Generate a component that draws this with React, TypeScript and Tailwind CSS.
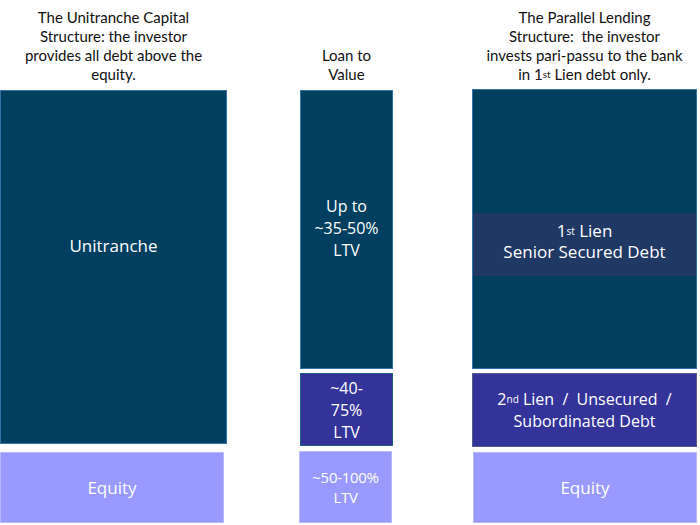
import React from 'react';

const headFont = { fontFamily: 'Lato, "Liberation Sans", sans-serif' };

const Sup: React.FC<{ children: React.ReactNode }> = ({ children }) => (
  <sup className="text-[10px] relative -top-[2px]">{children}</sup>
);

export default function App() {
  return (
    <div
      className="w-[700px] h-[525px] bg-white flex text-white text-[16px]"
      style={{ fontFamily: '"Open Sans", "Noto Sans", sans-serif' }}
    >
      {/* Unitranche column */}
      <div className="w-[227px] flex flex-col">
        <div
          className="h-[89px] flex items-end justify-center pb-[5px] text-center text-[15px] leading-[19px] text-[#111]"
          style={headFont}
        >
          The Unitranche Capital
          <br />
          Structure: the investor
          <br />
          provides all debt above the
          <br />
          equity.
        </div>
        <div className="mt-[1px] h-[354px] bg-[#003f5f] border border-[#2e74a8] flex items-center justify-center pb-[42px] text-[17px]">
          Unitranche
        </div>
        <div className="mt-[8px] w-[224px] h-[71px] bg-[#9999ff] border border-[#b8b8ff] flex items-center justify-center text-[17px]">
          Equity
        </div>
      </div>

      {/* Loan to Value column */}
      <div className="ml-[73px] w-[93px] flex flex-col">
        <div
          className="h-[89px] flex items-end justify-center pb-[5px] text-center text-[15px] leading-[19px] text-[#111]"
          style={headFont}
        >
          Loan to
          <br />
          Value
        </div>
        <div className="mt-[1px] h-[279px] bg-[#003f5f] border border-[#2e74a8] flex items-center justify-center text-center leading-[22px] pb-[4px]">
          Up to
          <br />
          ~35-50%
          <br />
          LTV
        </div>
        <div className="mt-[4px] h-[73px] bg-[#333399] border border-[#1f5f86] flex items-center justify-center text-center leading-[22px] pt-[1px]">
          ~40-
          <br />
          75%
          <br />
          LTV
        </div>
        <div className="mt-[5px] -ml-[1px] w-[93px] h-[72px] bg-[#9999ff] border border-[#b8b8ff] flex items-center justify-center text-center text-[15px] leading-[20px] tracking-[-0.3px]">
          ~50-100%
          <br />
          LTV
        </div>
      </div>

      {/* Parallel lending column */}
      <div className="ml-[79px] w-[225px] flex flex-col">
        <div
          className="h-[89px] flex items-end justify-center pb-[5px] text-center text-[15px] leading-[19px] text-[#111]"
          style={headFont}
        >
          <div>
            The Parallel Lending
            <br />
            Structure:&nbsp; the investor
            <br />
            invests pari-passu to the bank
            <br />
            in 1<Sup>st</Sup> Lien debt only.
          </div>
        </div>
        <div className="h-[280px] bg-[#003f5f] border border-[#2e74a8] flex flex-col pt-[123px]">
          <div className="h-[63px] bg-[#203864] flex flex-col items-center justify-center text-[17px] leading-[21px] pb-[8px]">
            <div>
              1<Sup>st</Sup> Lien
            </div>
            <div>Senior Secured Debt</div>
          </div>
        </div>
        <div className="mt-[4px] h-[74px] bg-[#333399] border border-[#5a5a8a] flex flex-col items-center justify-center leading-[22px] whitespace-nowrap">
          <div>
            2<Sup>nd</Sup> Lien&nbsp; /&nbsp; Unsecured&nbsp; /
          </div>
          <div>Subordinated Debt</div>
        </div>
        <div className="mt-[5px] ml-[1px] w-[224px] h-[71px] bg-[#9999ff] border border-[#b8b8ff] flex items-center justify-center text-[17px]">
          Equity
        </div>
      </div>
    </div>
  );
}
